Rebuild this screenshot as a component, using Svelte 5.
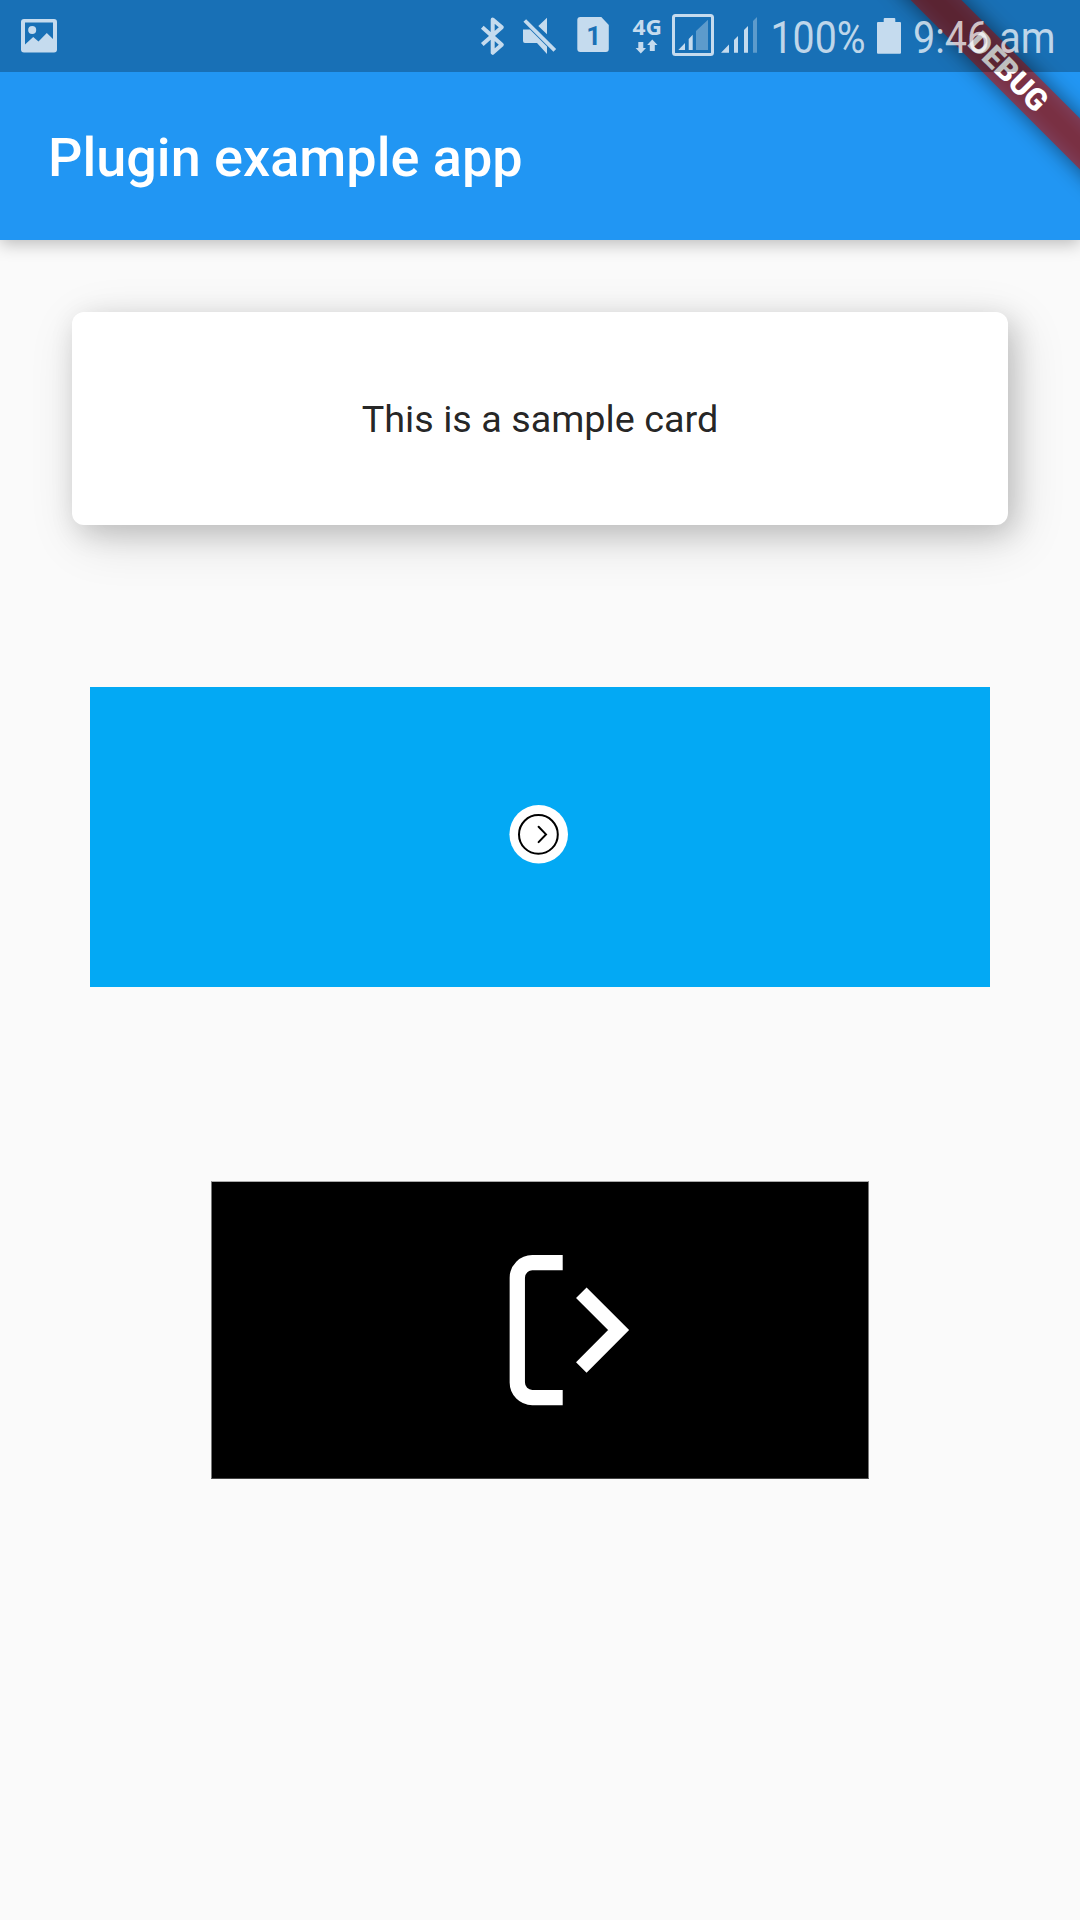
<script>
  const title = 'Plugin example app';
  const cardText = 'This is a sample card';
</script>

<div class="screen">
  <header class="app-bar">
    <h1>{title}</h1>
  </header>

  <main>
    <section class="card">{cardText}</section>

    <section class="swipe-panel">
      <svg viewBox="0 0 900 300" width="900" height="300">
        <circle cx="448.7" cy="147.2" r="29.3" fill="#fff" />
        <circle cx="448.4" cy="147.4" r="19.4" fill="none" stroke="#000" stroke-width="2" />
        <path d="M448.6 139.8l7.4 7.6-7.4 7.7" fill="none" stroke="#000" stroke-width="2" stroke-linecap="round" />
      </svg>
    </section>

    <section class="exit-panel">
      <svg viewBox="0 0 656 296" width="656" height="296">
        <g fill="none" stroke="#fff">
          <path d="M350.7 80.7H320.3a15 15 0 0 0 -15 15V200.6a15 15 0 0 0 15 15H350.7" stroke-width="15.3" />
          <path d="M369.3 110.7l37.3 37.4-37.3 37.3" stroke-width="14.9" />
        </g>
      </svg>
    </section>
  </main>

  <div class="banner"><span>DEBUG</span></div>

  <div class="status-bar">
    <svg viewBox="0 0 72 72" width="72" height="72">
      <path fill-rule="evenodd" d="M24 19H54a3 3 0 0 1 3 3V49.5a3 3 0 0 1-3 3H24a3 3 0 0 1-3-3V22a3 3 0 0 1 3-3zM25 22.6V44.5L33.2 37l5.3 4.5L46.8 33 53 39V22.6z" />
      <circle cx="32.2" cy="30" r="4" />
    </svg>

    <svg class="push" viewBox="470 0 45 72" width="45" height="72">
      <path class="line" d="M482.3 27.3L501.8 44.8 492.7 52.8V19.4L501.8 27.2 482.3 44.6" stroke-width="4" stroke-linejoin="round" />
    </svg>
    <svg viewBox="515 0 50 72" width="50" height="72">
      <path d="M523 29.4H530L547 46.5V54L537 43H525a2 2 0 0 1-2-2zM538.3 26L547 17.8V34.3z" />
      <path class="line" d="M524.8 20.5L554.8 50.3" stroke-width="3.8" />
    </svg>
    <svg viewBox="565 0 60 72" width="60" height="72">
      <path d="M580.3 17H601.3L608.8 25V49a3 3 0 0 1-3 3H580.3a3 3 0 0 1-3-3V20a3 3 0 0 1 3-3z" />
      <text class="sim" x="586.3" y="45">1</text>
    </svg>
    <svg viewBox="625 0 40 72" width="40" height="72">
      <text class="net" x="632.5" y="35" textLength="29.5" lengthAdjust="spacingAndGlyphs">4G</text>
      <path d="M638.3 42h5v6h2.7l-5.2 5.5-5.2-5.5h2.7zM649.8 51h5v-6h2.7l-5.2-5.5-5.2 5.5h2.7z" />
    </svg>
    <svg viewBox="665 0 52 72" width="52" height="72">
      <rect class="line" x="673.5" y="15.4" width="39" height="39" rx="2" stroke-width="3" />
      <path d="M678.3 50L685 43V50zM688.7 50V39L692.7 34.8V50z" />
      <path class="dim" d="M696 50V31L708 19.8V50z" />
    </svg>
    <svg viewBox="717 0 50 72" width="50" height="72">
      <path d="M721 52.8L729 44.6V52.8zM734 52.8V40L738 36V52.8zM744 52.8V30L748 26V52.8z" />
      <path class="dim" d="M753 52.8V21L757 17V52.8z" />
    </svg>
    <svg viewBox="767 0 103 72" width="103" height="72">
      <text class="info" x="770.5" y="52.5" textLength="95" lengthAdjust="spacingAndGlyphs">100%</text>
    </svg>
    <svg viewBox="870 0 37 72" width="37" height="72">
      <path d="M878 22H883.7V19a1 1 0 0 1 1-1H894.3a1 1 0 0 1 1 1V22H900a1 1 0 0 1 1 1V52.7a1 1 0 0 1-1 1H878a1 1 0 0 1-1-1V23a1 1 0 0 1 1-1z" />
    </svg>
    <svg viewBox="907 0 173 72" width="173" height="72">
      <text class="info" x="913" y="52.5" textLength="142.5" lengthAdjust="spacingAndGlyphs">9:46 am</text>
    </svg>
  </div>
</div>

<style>
  :global(body) {
    margin: 0;
    background: #fafafa;
  }

  .screen {
    position: relative;
    width: 1080px;
    height: 1920px;
    overflow: hidden;
    background: #fafafa;
    font-family: Roboto, 'Liberation Sans', sans-serif;
  }

  svg {
    display: block;
    flex: none;
    overflow: visible;
  }

  .app-bar {
    box-sizing: border-box;
    height: 240px;
    padding: 75px 48px 0;
    display: flex;
    align-items: center;
    background: #2196f3;
    box-shadow: 0 4px 16px rgba(0, 0, 0, 0.25);
  }

  h1 {
    margin: 0;
    font-size: 54px;
    font-weight: 500;
    line-height: 64px;
    color: #fff;
  }

  main {
    display: flex;
    flex-direction: column;
    align-items: center;
    padding-top: 72px;
  }

  .card {
    width: 936px;
    height: 213px;
    display: flex;
    align-items: center;
    justify-content: center;
    border-radius: 12px;
    background: #fff;
    box-shadow:
      6px 8px 28px rgba(0, 0, 0, 0.16),
      8px 14px 52px rgba(0, 0, 0, 0.14);
    font-size: 37.8px;
    line-height: 44px;
    color: rgba(0, 0, 0, 0.87);
  }

  .swipe-panel {
    width: 900px;
    height: 300px;
    margin-top: 162px;
    background: #03a9f4;
  }

  .exit-panel {
    margin-top: 194px;
    border: 1px solid #777;
    border-top-color: #aaa;
    border-bottom-color: #444;
    background: #000;
  }

  .banner {
    position: absolute;
    top: 54px;
    left: 858px;
    width: 300px;
    height: 36px;
    display: flex;
    align-items: center;
    justify-content: center;
    transform: rotate(45deg);
  }

  .banner::before,
  .banner::after {
    content: '';
    position: absolute;
    inset: 0;
  }

  .banner::before {
    background: rgba(0, 0, 0, 0.5);
    filter: blur(10.9px);
  }

  .banner::after {
    background: rgba(183, 28, 28, 0.627);
  }

  .banner span {
    position: relative;
    z-index: 1;
    font-size: 30.6px;
    font-weight: 900;
    line-height: 30px;
    color: #fff;
  }

  .status-bar {
    position: absolute;
    inset: 0 0 auto;
    height: 72px;
    display: flex;
    background: rgba(0, 0, 0, 0.25);
  }

  .status-bar svg {
    fill: #c5dbee;
  }

  .push {
    margin-left: auto;
  }

  .status-bar .line {
    fill: none;
    stroke: #c5dbee;
  }

  .dim {
    fill-opacity: 0.4;
  }

  .info {
    fill: #fff;
    fill-opacity: 0.72;
    font-size: 45px;
  }

  .sim {
    fill: #1a70b6;
    font-size: 26px;
    font-weight: 700;
  }

  .net {
    font-family: 'Noto Sans', 'Open Sans', sans-serif;
    font-size: 22px;
    font-weight: 700;
  }
</style>
